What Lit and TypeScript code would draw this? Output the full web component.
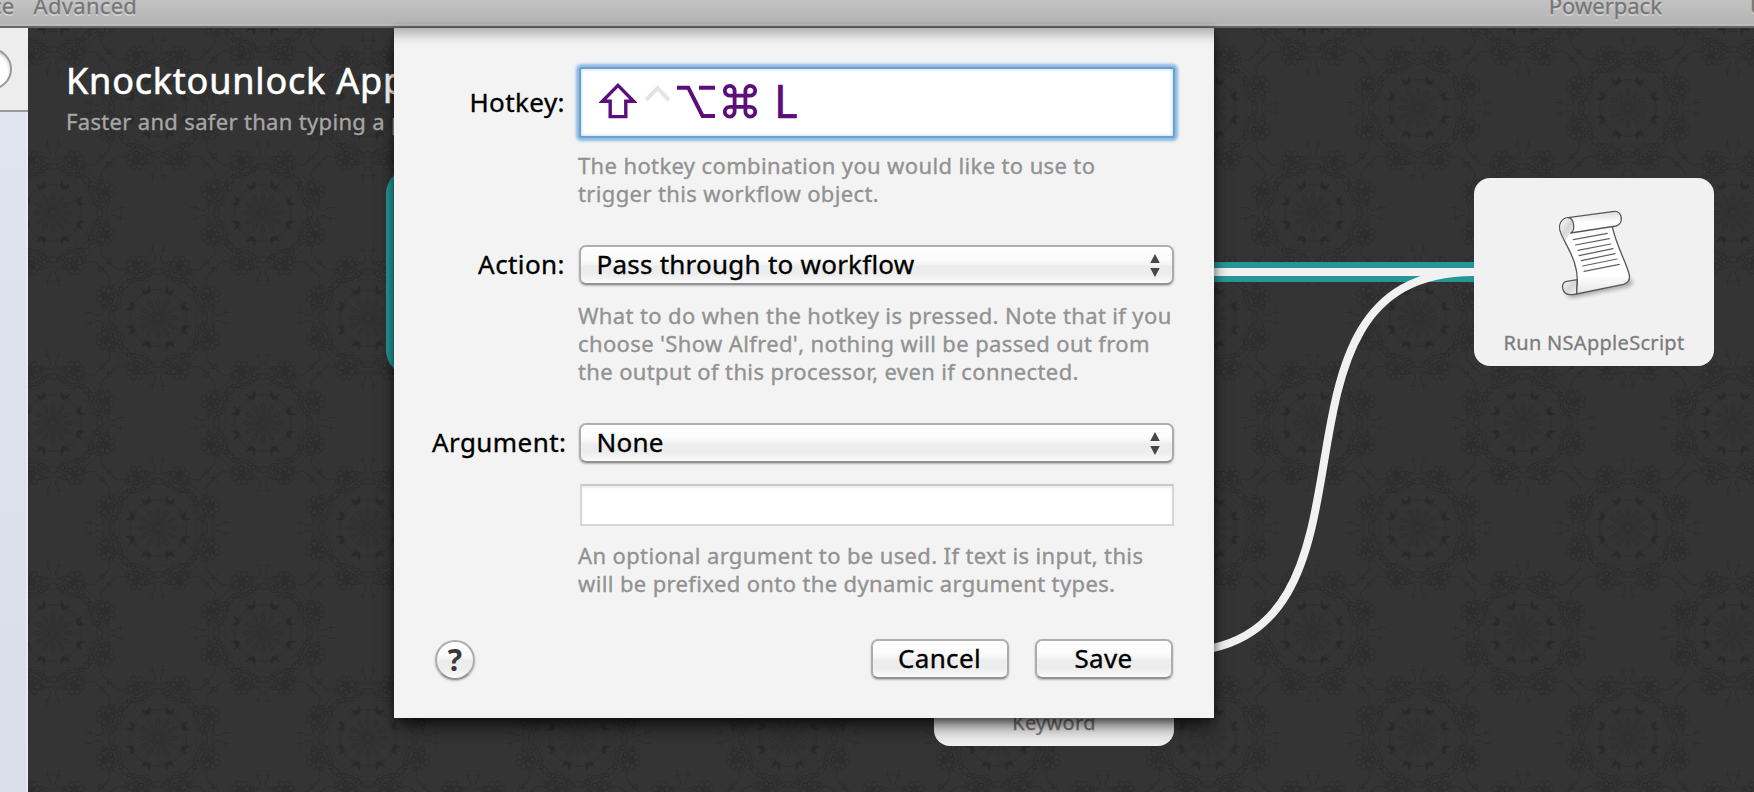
import { LitElement, html, css, svg } from "lit";
import { customElement } from "lit/decorators.js";

const FONT = css`"Noto Sans", "Open Sans", sans-serif`;

/* ---------- damask backdrop ---------- */

const turn = (count: number, offset = 0) =>
  Array.from({ length: count }, (_, i) => (360 / count) * i + offset);

const medallion = () => svg`
  <g id="medallion" fill="none" stroke="#2c2c2c" stroke-width="1">
    ${turn(12).map(
      (a) => svg`<g transform="rotate(${a})">
        <path d="M0 -3V-24" stroke="#303030" stroke-width="0.7"/>
        <path d="M0 -2L-2 -12M0 -2L2 -12" stroke="#2e2e2e" stroke-width="0.800"/>
        <ellipse cx="0" cy="-16" rx="2" ry="3.4" stroke="#2d2d2d" stroke-width="0.900"/>
        <path d="M-3 -25a2.2 2.2 0 1 1 3 0a2.2 2.2 0 1 1 3 0" stroke="#2e2e2e" stroke-width="0.800"/>
      </g>`,
    )}
    <circle r="28.500" stroke="#2d2d2d" stroke-width="0.900"/>
    ${turn(8, 22.5).map(
      (a) => svg`<g transform="rotate(${a})">
        <path d="M-4.600 -34.500C-4.500 -27 -3 -25.500 0 -25.500S4.500 -27 4.600 -34.500C3 -31.500 1.500 -30 0 -30S-3 -31.500 -4.600 -34.500Z" fill="#2a2a2a" stroke="none"/>
        <path d="M-13 -35Q-6 -41 0 -37Q6 -41 13 -35" stroke="#303030"/>
        <g transform="translate(0 -57)">
          ${turn(7).map((b) => svg`<ellipse transform="rotate(${b})" cx="0" cy="-6" rx="2.800" ry="3.800"/>`)}
          ${turn(5).map((b) => svg`<ellipse transform="rotate(${b})" cx="0" cy="-2.400" rx="1.200" ry="2"/>`)}
        </g>
        <g transform="translate(0 -46)" stroke-width="1.100">
          <path d="M-11 2q3 -6 6 -1q-4 4 -6 1M-5 -3q2 -6 5 -2q-1 5 -5 2M11 2q-3 -6 -6 -1q4 4 6 1M5 -3q-2 -6 -5 -2q1 5 5 2"/>
          <path d="M-8 6q4 -4 8 0q4 -4 8 0M-12 -4q3 -3 5 1M12 -4q-3 -3 -5 1M-4 1q4 3 8 0"/>
          <path d="M-13 -9q3 -4 5 0q-3 4 -5 0M13 -9q-3 -4 -5 0q3 4 5 0M-9 -3l3 4M9 -3l-3 4"/>
        </g>
      </g>`,
    )}
    ${turn(8).map(
      (a) => svg`<g transform="rotate(${a})">
        <path d="M-9 -41q4 -6 9 -2q5 -4 9 2M-7 -50q3 3 7 0q4 3 7 0M-8 -46q2 -4 5 -1q-3 4 -5 1M8 -46q-2 -4 -5 -1q3 4 5 1"/>
        <path d="M-9 -54L9 -54" stroke="#2f2f2f"/>
      </g>`,
    )}
    ${turn(4).map(
      (a) => svg`<g transform="rotate(${a})" stroke-width="1">
        <path d="M-5.400 -73V-66Q-2 -62 -2.400 -59Q-4 -54 -9 -55M5.400 -73V-66Q2 -62 2.400 -59Q4 -54 9 -55"/>
        <path d="M-8.500 -68q3 2 6 0M8.500 -68q-3 2 -6 0"/>
      </g>`,
    )}
    ${turn(4, 45).map(
      (a) => svg`<g transform="rotate(${a})" stroke-width="1">
        <path d="M-14 -58Q-4 -60 -5 -66V-83M14 -58Q4 -60 5 -66V-83"/>
        <path d="M-5 -72l-4 -2M-5 -72l3 -3M5 -72l4 -2M5 -72l-3 -3"/>
      </g>`,
    )}
  </g>`;

const MEDALLION_SPOTS = [
  [25, 185], [235, 185], [25, -25], [235, -25], [130, 80], [-80, 80], [340, 80],
];

const damask = () => svg`
  <svg class="backdrop" aria-hidden="true">
    <defs>
      ${medallion()}
      <pattern id="damask" width="210" height="210" patternUnits="userSpaceOnUse">
        ${MEDALLION_SPOTS.map(([x, y]) => svg`<use href="#medallion" x="${x}" y="${y}"/>`)}
      </pattern>
    </defs>
    <rect width="100%" height="100%" fill="#343434"/>
    <rect width="100%" height="100%" fill="url(#damask)"/>
  </svg>`;

/* ---------- icons ---------- */

const SCROLL_LINES = [
  [400, 239, 502, 220], [406, 255, 508, 236], [414, 271, 512, 252], [417, 287, 519, 266],
  [424, 302, 525, 281], [428, 318, 531, 297], [432, 334, 538, 313],
];

const scrollIcon = svg`
  <svg class="scroll" viewBox="312 129 300 300" aria-hidden="true">
    <defs>
      <linearGradient id="paper" x1="0" y1="0" x2="0" y2="1">
        <stop offset="0" stop-color="#f0f0f0"/><stop offset="0.250" stop-color="#fff"/>
        <stop offset="0.750" stop-color="#fff"/><stop offset="1" stop-color="#e6e6e6"/>
      </linearGradient>
      <linearGradient id="roll" x1="0" y1="0" x2="0" y2="1">
        <stop offset="0" stop-color="#dcdcdc"/><stop offset="0.500" stop-color="#fff"/><stop offset="1" stop-color="#fff"/>
      </linearGradient>
      <linearGradient id="curl" x1="0" y1="0" x2="1" y2="1">
        <stop offset="0" stop-color="#fff"/><stop offset="0.500" stop-color="#d6d6d6"/><stop offset="1" stop-color="#f4f4f4"/>
      </linearGradient>
      <filter id="soft" x="-20%" y="-20%" width="150%" height="150%"><feGaussianBlur stdDeviation="7"/></filter>
    </defs>
    <path d="M380 385L560 355C580 352 584 372 566 380L400 413C385 413 374 404 380 385Z" fill="#000" opacity="0.300" filter="url(#soft)"/>
    <g stroke="#585858" stroke-width="4" stroke-linejoin="round">
      <path fill="url(#curl)" d="M412 359L380 364C369 366 366 376 368 385C371 399 382 405 397 404L410 402Z"/>
      <path fill="url(#paper)" d="M384 173C362 176 355 195 361 215C372 250 420 305 411 380L410 402L550 373C565 369 570 360 568 346C562 312 530 262 517 200L400 190Z"/>
      <path fill="url(#curl)" stroke="none" d="M384 174C364 178 358 194 363 214L376 240L392 219C405 210 404 186 396 176Z"/>
      <path fill="url(#roll)" d="M384 173L523 154C548 153 552 192 528 198L392 219C406 212 404 174 384 173Z"/>
    </g>
    <g stroke="#606060" stroke-width="3.600" stroke-linecap="round">
      ${SCROLL_LINES.map(([a, b, c, d]) => svg`<line x1="${a}" y1="${b}" x2="${c}" y2="${d}"/>`)}
    </g>
  </svg>`;

const shiftIcon = svg`<svg width="38" height="36" viewBox="0 0 38 36" aria-label="Shift">
  <path d="M19 2.400L34.600 18.200H26.800V33.600H11.200V18.200H3.400Z" fill="none" stroke="#5b0e7c" stroke-width="3.400"/></svg>`;
const controlIcon = svg`<svg width="27" height="36" viewBox="0 0 27 36" aria-label="Control">
  <path d="M2 17L13.500 5.200L25 17" fill="none" stroke="#e4e4e4" stroke-width="4"/></svg>`;
const optionIcon = svg`<svg width="38" height="36" viewBox="0 0 38 36" aria-label="Option">
  <path d="M0 4.700H11.300L25.600 33H38M22 4.700H38" fill="none" stroke="#5b0e7c" stroke-width="4"/></svg>`;
const commandIcon = svg`<svg width="34" height="36" viewBox="0 0 34 36" aria-label="Command">
  <path d="M11.600 12.600H22.400V23.800H11.600ZM11.600 12.600V8.300A4.900 4.900 0 1 0 6.700 12.600ZM22.400 12.600H27.300A4.900 4.900 0 1 0 22.400 8.300ZM22.400 23.800V28.600A4.900 4.900 0 1 0 27.300 23.800ZM11.600 23.800H6.700A4.900 4.900 0 1 0 11.600 28.600Z"
    fill="none" stroke="#5b0e7c" stroke-width="3.800"/></svg>`;

/* ---------- form controls ---------- */

@customElement("popup-button")
class PopupButton extends LitElement {
  static properties = { value: {} };
  declare value: string;

  static styles = css`
    :host { display: block; }
    .box {
      box-sizing: border-box; width: 595px; height: 40px; margin-left: 0.500px; padding: 0 12px 2px 16px;
      display: flex; align-items: center; justify-content: space-between;
      border: 2px solid; border-color: #aeaeae #acacac #929292; border-radius: 7px;
      background: linear-gradient(#fff 0, #fbfbfb 35%, #f3f3f3 50%, #ececec 52%, #ededed 75%, #fafafa 100%);
      box-shadow: 0 1px 2px rgba(0, 0, 0, 0.250);
      font: 26px/34px ${FONT}; letter-spacing: 0.240px; color: #000; -webkit-text-stroke: 0.350px #000;
    }
    svg { display: block; margin-top: 3px; }
  `;

  render() {
    return html`<div class="box"><span>${this.value}</span>
      <svg width="10" height="23" viewBox="0 0 10 23" fill="#464646" aria-hidden="true">
        <path d="M5 0L9.800 9H0.200ZM0.200 14H9.800L5 23Z"/></svg></div>`;
  }
}

@customElement("hotkey-sheet")
class HotkeySheet extends LitElement {
  static styles = css`
    :host { display: block; font-family: ${FONT}; }
    .sheet {
      box-sizing: border-box; width: 820px; height: 690px; padding: 38px 41px 39px 38px;
      display: flex; flex-direction: column;
      background: linear-gradient(#b4b4b4 0, #c9c9c9 5px, #e6e6e6 11px, #f0f0f0 16px, #f3f3f3 20px) #f3f3f3;
      box-shadow: 0 12px 18px -5px rgba(0, 0, 0, 0.650), 0 2px 9px rgba(0, 0, 0, 0.450);
    }
    .row { display: grid; grid-template-columns: 134px 596px; column-gap: 12px; }
    .row + .row { margin-top: 38px; }
    .label {
      text-align: right; font-size: 26px; line-height: 38px; letter-spacing: 0.420px; white-space: nowrap;
      color: #000; -webkit-text-stroke: 0.350px #000; margin-right: 1px;
    }
    .first .label { padding-top: 17px; }
    .hint {
      margin: 16px 0 0; font-size: 22px; line-height: 28px; letter-spacing: 0.370px; color: #929292;
      -webkit-text-stroke: 0.350px #929292; white-space: nowrap;
    }
    .first .hint { margin-top: 13px; }
    .field + .hint { margin-top: 15px; }
    .hotkey {
      box-sizing: border-box; margin: 1px 0 0 1px; width: 596px; height: 71px; padding: 0 0 3px 18px;
      display: flex; align-items: center; background: #fff; border: 2px solid #6ba0d2; border-radius: 3px;
      box-shadow: 0 0 3px 2.500px #8cb9e1, inset 0 0 3px 1px #cfe2f4;
    }
    .hotkey svg { display: block; flex: none; }
    .hotkey .control { margin-left: 7px; }
    .hotkey .option { margin-left: 6px; }
    .hotkey .command { margin-left: 8px; }
    .key { margin-left: 17px; font-size: 45px; line-height: 60px; color: #5b0e7c; -webkit-text-stroke: 0.700px #5b0e7c; }
    .field {
      box-sizing: border-box; margin: 21px 0 0 2px; width: 594px; height: 42px; background: #fff;
      border: 2px solid #d6d6d6; border-top-color: #c8c8c8; box-shadow: inset 0 2px 2px #eee;
    }
    .footer { margin-top: auto; display: flex; align-items: center; }
    .help, .push {
      box-sizing: border-box; height: 40px; border: 2px solid; border-color: #aeaeae #acacac #929292;
      background: linear-gradient(#fff 0, #fbfbfb 35%, #f3f3f3 50%, #ececec 52%, #ededed 75%, #fafafa 100%);
      box-shadow: 0 1px 2px rgba(0, 0, 0, 0.250); text-align: center; color: #000;
    }
    .help { width: 40px; margin: 1px auto -1px 3px; padding: 0; border-radius: 50%; font: bold 30px/36px ${FONT}; color: #383838; }
    .push {
      width: 138px; margin-left: 26px; padding: 0 1px 2px 0; border-radius: 7px; font: 26px/34px ${FONT};
      letter-spacing: 0.350px; -webkit-text-stroke: 0.350px #000;
    }
  `;

  render() {
    return html`<div class="sheet" role="dialog">
      <div class="row first">
        <div class="label">Hotkey:</div>
        <div>
          <div class="hotkey">
            <span>${shiftIcon}</span><span class="control">${controlIcon}</span>
            <span class="option">${optionIcon}</span><span class="command">${commandIcon}</span>
            <span class="key">L</span>
          </div>
          <p class="hint">The hotkey combination you would like to use to<br>trigger this workflow object.</p>
        </div>
      </div>
      <div class="row">
        <div class="label">Action:</div>
        <div>
          <popup-button value="Pass through to workflow"></popup-button>
          <p class="hint">What to do when the hotkey is pressed. Note that if you<br>choose 'Show Alfred', nothing will be passed out from<br>the output of this processor, even if connected.</p>
        </div>
      </div>
      <div class="row">
        <div class="label">Argument:</div>
        <div>
          <popup-button value="None"></popup-button>
          <div class="field"></div>
          <p class="hint">An optional argument to be used. If text is input, this<br>will be prefixed onto the dynamic argument types.</p>
        </div>
      </div>
      <div class="footer">
        <button class="help">?</button>
        <button class="push">Cancel</button>
        <button class="push">Save</button>
      </div>
    </div>`;
  }
}

@customElement("app-root")
class AppRoot extends LitElement {
  static styles = css`
    :host {
      position: relative; display: grid; grid-template-rows: 28px 1fr; width: 100%; height: 100vh;
      overflow: hidden; font-family: ${FONT};
    }
    .toolbar {
      box-sizing: border-box; display: flex; justify-content: space-between; overflow: hidden;
      background: linear-gradient(#c3c3c3 0, #b3b3b3 24px, #bdbdbd 24px, #b9b9b9 26px);
      border-bottom: 2px solid #676767; color: #767676; font-size: 22px; line-height: 30px;
      text-shadow: 0 1.500px 0 rgba(255, 255, 255, 0.400); white-space: nowrap;
      -webkit-text-stroke: 0.300px #767676;
    }
    .tabs { display: flex; margin-top: -10px; }
    .tabs.left { gap: 19px; margin-left: -9px; letter-spacing: 0.300px; }
    .tabs.right { gap: 88px; margin-right: -12px; }
    .body { display: grid; grid-template-columns: 28px 1fr; min-height: 0; }
    .sidebar { display: flex; flex-direction: column; overflow: hidden; }
    .search { box-sizing: border-box; height: 84px; padding-top: 20px; background: #ededed; border-bottom: 2px solid #989898; }
    .search-field {
      box-sizing: border-box; width: 200px; height: 42px; margin-left: -188px; border-radius: 21px;
      border: 2px solid #989898; background: #fff; box-shadow: inset 0 2px 3px #ccc;
    }
    .list { flex: 1; background: linear-gradient(90deg, transparent 26px, rgba(233, 236, 242, 0.700) 26px), linear-gradient(#dfe4ee, #d9dee8); }
    .canvas { position: relative; overflow: hidden; background: #343434; }
    .backdrop, .wires { position: absolute; inset: 0; width: 100%; height: 100%; }
    .heading { position: relative; padding: 28px 0 0 38px; white-space: nowrap; }
    h1 {
      margin: 0; font-weight: 400; font-size: 36px; line-height: 50px; letter-spacing: 0.800px; color: #fff;
      -webkit-text-stroke: 0.600px #fff;
    }
    .sub {
      margin: 0; font-size: 22px; line-height: 30px; letter-spacing: 0.330px; color: #a6a6a6;
      -webkit-text-stroke: 0.350px #a6a6a6;
    }
    .node {
      position: absolute; box-sizing: border-box; width: 240px; height: 188px; padding: 25px 0 10px;
      display: flex; flex-direction: column; align-items: center; justify-content: space-between;
      border-radius: 16px; background: #f1f1f1; color: #7c7c7c; -webkit-text-stroke: 0.300px #7c7c7c;
      font-size: 20px; line-height: 26px; letter-spacing: 0.300px; white-space: nowrap;
    }
    .node .caption { margin-top: auto; }
    .scroll { width: 100px; height: 100px; display: block; }
    .hotkey-node { left: 368px; top: 150px; box-shadow: 0 0 0 10px #249796; }
    .script-node { left: 1446px; top: 150px; }
    .keyword-node { left: 906px; top: 530px; }
    hotkey-sheet { position: absolute; left: 394px; top: 28px; }
  `;

  render() {
    return html`
      <div class="toolbar">
        <div class="tabs left"><span>ce</span><span>Advanced</span></div>
        <div class="tabs right"><span>Powerpack</span><span>U</span></div>
      </div>
      <div class="body">
        <div class="sidebar">
          <div class="search"><div class="search-field"></div></div>
          <div class="list"></div>
        </div>
        <div class="canvas">
          ${damask()}
          <div class="heading">
            <h1>Knocktounlock App</h1>
            <p class="sub">Faster and safer than typing a password</p>
          </div>
          <div class="node hotkey-node"><span class="caption">Hotkey</span></div>
          <svg class="wires" fill="none" aria-hidden="true">
            <path d="M608 244H1446" stroke="#249796" stroke-width="20"/>
            <path d="M608 244H1446" stroke="#f1f1f1" stroke-width="8"/>
            <path d="M1146 624C1383 624 1209 244 1446 244" stroke="#f1f1f1" stroke-width="8"/>
          </svg>
          <div class="node script-node">${scrollIcon}<span class="caption">Run NSAppleScript</span></div>
          <div class="node keyword-node"><span class="caption">Keyword</span></div>
        </div>
      </div>
      <hotkey-sheet></hotkey-sheet>`;
  }
}
